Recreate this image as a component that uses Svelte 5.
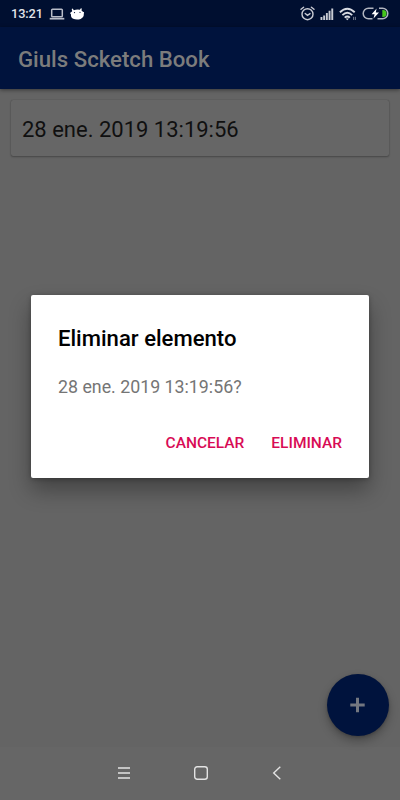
<script lang="ts">
  let entries = $state(["28 ene. 2019 13:19:56"]);
  let selected = $state<string | null>("28 ene. 2019 13:19:56");

  const close = () => (selected = null);
  const remove = () => {
    entries = entries.filter((entry) => entry !== selected);
    close();
  };
</script>

<div class="screen">
  <header class="status">
    <span class="clock">13:21</span>
    <svg class="laptop" width="16" height="12" viewBox="0 0 16 12">
      <rect x="2.7" y="1.2" width="10.6" height="7.6" rx="0.8" fill="none" stroke="#b9bdc8" stroke-width="1.5" />
      <path d="M.7 10.7h14.6" stroke="#b9bdc8" stroke-width="1.7" />
    </svg>
    <svg class="android" width="15" height="12" viewBox="0 0 15 12" fill="#fff">
      <path d="M2.2 3.2 1.700.9l.9-.3 1.300 1.600Q7 1 9.900 1.800L10.900.2l.9.300-.3 2 1.400 1.300 1.200.5-.3 1.800c.2 2.500-1.100 4.100-3.200 4.800-2.500.8-5.400.7-7.400-.2C1.300 9.800.8 8.200 1 6.400L0 5.100Z" />
      <circle cx="4.5" cy="4.6" r=".6" fill="#000f30" />
      <circle cx="10" cy="4.3" r=".6" fill="#000f30" />
    </svg>
    <div class="indicators">
      <svg width="15" height="15" viewBox="0 0 15 15" fill="none" stroke="#c9ccd4" stroke-width="1.4" stroke-linecap="round">
        <circle cx="7.5" cy="8.2" r="5.5" />
        <path d="M1 3.300 3.600 1.200M14 3.300 11.400 1.200M5.200 7.500l2.300 1.800 2.500-1.700" />
      </svg>
      <svg width="14" height="12" viewBox="0 0 14 12" fill="#c9ccd4">
        <path d="M.5 9h1.900v3H.5zM3.200 7.500h1.900V12H3.200zM5.900 5h1.900v7H5.900zM8.600 2.700h1.900V12H8.600zM11.300.5h1.900V12h-1.900z" />
      </svg>
      <svg width="18" height="14" viewBox="0 0 18 14" fill="none" stroke="#d9dce2" stroke-width="1.9">
        <path d="M.9 5.300Q8.300-1.700 15.700 5.300M3.400 8.100q4.900-4.600 9.800 0M5.700 10.600q2.600-2.400 5.200 0" />
        <path d="m6.600 11.400 1.700 1.800 1.700-1.800Z" fill="#d9dce2" stroke="none" />
        <path d="M14.600 9.800v3.200M16.400 9.800v3.200" stroke="#747d91" stroke-width="1" />
      </svg>
      <svg width="27" height="13" viewBox="0 0 27 13">
        <path d="M11.500 1.200H6.500a5.300 5.300 0 0 0 0 10.600H10.500M17 1.200h3.500a5.300 5.300 0 0 1 0 10.600H15.500" fill="none" stroke="#b2b6c0" stroke-width="1.5" />
        <path d="M20.300 3h.7a3.500 3.500 0 0 1 0 7h-.7z" fill="#46c61c" />
        <path d="M14.600 1.500 9.600 7.300h3L11.500 11.500l5.500-6h-3.200z" fill="#fff" />
      </svg>
    </div>
  </header>

  <div class="toolbar"><h1>Giuls Scketch Book</h1></div>

  <main>
    {#each entries as entry}
      <button class="entry" onclick={() => (selected = entry)}>{entry}</button>
    {/each}
  </main>

  <button class="fab" aria-label="Nuevo">
    <svg width="16" height="16" viewBox="0 0 16 16"><path d="M7.500.8v14.400M.3 8h14.400" stroke="#737780" stroke-width="3" /></svg>
  </button>

  <nav>
    <svg width="14" height="14" viewBox="0 0 14 14"><path d="M1 2h12M1 7h12M1 12h12" /></svg>
    <svg width="16" height="16" viewBox="0 0 16 16"><rect x="1.7" y="1.7" width="12.6" height="12.6" rx="2.5" /></svg>
    <svg width="14" height="16" viewBox="0 0 14 16"><path d="m10.300 1.700-6.600 6.300 6.600 6.300" /></svg>
  </nav>

  {#if selected}
    <div class="overlay">
      <div class="dialog" role="dialog" aria-modal="true">
        <h2>Eliminar elemento</h2>
        <p>{selected}?</p>
        <div class="actions">
          <button onclick={close}>CANCELAR</button>
          <button onclick={remove}>ELIMINAR</button>
        </div>
      </div>
    </div>
  {/if}
</div>

<style>
  :global(body) { margin: 0; }
  .screen {
    position: relative;
    display: flex;
    flex-direction: column;
    width: 400px;
    height: 800px;
    overflow: hidden;
    font-family: Roboto, sans-serif;
    background: #646464;
  }
  button { padding: 0; font: inherit; border: 0; cursor: pointer; }
  svg { display: block; flex: none; }
  .status {
    display: flex;
    flex: 0 0 27px;
    align-items: center;
    box-sizing: border-box;
    padding: 0 11px;
    color: #e1e4e9;
    background: #000f30;
  }
  .clock { width: 38px; font-size: 12.8px; font-weight: 500; line-height: 27px; letter-spacing: -0.1px; }
  .android { margin-left: 5px; }
  .indicators { display: flex; gap: 5px; align-items: center; margin-left: auto; }
  .toolbar {
    z-index: 1;
    display: flex;
    flex: 0 0 62px;
    align-items: center;
    padding: 1px 18px 0;
    box-sizing: border-box;
    background: #00133d;
    box-shadow: 0 1px 4px #0007;
  }
  h1 { margin: 0; color: #7c7c7c; font-size: 22.2px; font-weight: 500; line-height: 30px; }
  main { flex: 1; padding: 11px; }
  .entry {
    display: block;
    width: 100%;
    height: 56px;
    padding: 2px 11px 0;
    color: #101010;
    font-size: 22px;
    text-align: left;
    background: #666;
    border-radius: 2px;
    box-shadow: 0 1px 2px #0004, 0 0 1px #0005;
  }
  .fab {
    position: absolute;
    right: 11px;
    bottom: 64px;
    display: grid;
    width: 62px;
    height: 62px;
    place-items: center;
    background: #00133d;
    border-radius: 50%;
    box-shadow: 0 5px 10px #0004, 0 1px 3px #0003;
  }
  nav {
    display: flex;
    flex: 0 0 53px;
    gap: 61.5px;
    align-items: center;
    justify-content: center;
    box-sizing: border-box;
    padding: 0 0 1px 1px;
    background: #666;
  }
  nav svg { fill: none; stroke: #e3e3e3; stroke-width: 1.4; }
  .overlay { position: absolute; inset: 0; }
  .dialog {
    box-sizing: border-box;
    width: 338px;
    height: 183px;
    margin: 295px 0 0 31px;
    padding: 28px 27px 0 27px;
    background: #fff;
    border-radius: 2px;
    box-shadow: 0 12px 22px #0005, 0 1px 5px #0004;
  }
  h2 { margin: 0; color: #000; font-size: 22.1px; font-weight: 500; line-height: 30px; }
  p { margin: 22px 0 0; color: #757575; font-size: 17.8px; line-height: 24px; }
  .actions { display: flex; gap: 27px; justify-content: flex-end; margin-top: 33px; }
  .actions button { color: #d80b55; font-size: 15.5px; font-weight: 500; line-height: 22px; background: none; }
</style>
